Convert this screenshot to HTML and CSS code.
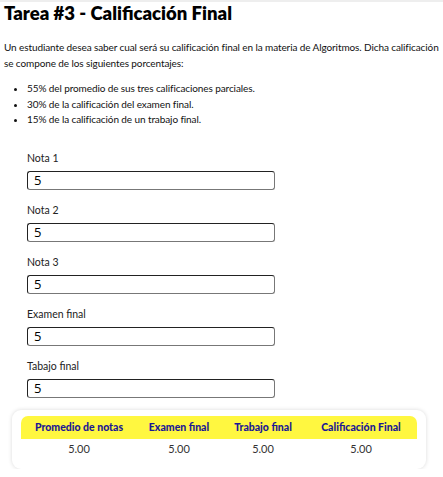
FILE: index.html
```html
<!DOCTYPE html>
<html lang="es">
<head>
<meta charset="utf-8">
<link rel="stylesheet" href="styles.css">
</head>
<body>
<div class="page">
  <h1 class="title">Tarea #3 - Calificación Final</h1>
  <p class="intro">Un estudiante desea saber cual será su calificación final en la materia de Algoritmos. Dicha calificación se compone de los siguientes porcentajes:</p>
  <ul class="rules">
    <li>55% del promedio de sus tres calificaciones parciales.</li>
    <li>30% de la calificación del examen final.</li>
    <li>15% de la calificación de un trabajo final.</li>
  </ul>
  <form class="form">
    <div class="field"><label class="label">Nota 1</label><input class="input" type="text" value="5"></div>
    <div class="field"><label class="label">Nota 2</label><input class="input" type="text" value="5"></div>
    <div class="field"><label class="label">Nota 3</label><input class="input" type="text" value="5"></div>
    <div class="field"><label class="label">Examen final</label><input class="input" type="text" value="5"></div>
    <div class="field"><label class="label">Tabajo final</label><input class="input" type="text" value="5"></div>
  </form>
  <div class="card">
    <table class="results">
      <thead>
        <tr><th class="c1">Promedio de notas</th><th class="c2">Examen final</th><th class="c3">Trabajo final</th><th class="c4">Calificación Final</th></tr>
      </thead>
      <tbody>
        <tr><td>5.00</td><td>5.00</td><td>5.00</td><td>5.00</td></tr>
      </tbody>
    </table>
  </div>
</div>
</body>
</html>
```
FILE: styles.css
```css
html, body {
  margin: 0;
  padding: 0;
  background: #ffffff;
}
body {
  border-top: 2px solid #eeeeee;
  font-family: "Lato", "Noto Sans", sans-serif;
  color: #111;
}
.page {
  padding: 0 4px;
}
.title {
  margin: 0;
  font-size: 18.5px;
  line-height: 22px;
  font-weight: 800;
  color: #000;
}
.intro {
  margin: 15px 0 0;
  font-size: 10px;
  letter-spacing: -0.1px;
  line-height: 16px;
}
.rules {
  margin: 10px 0 0;
  padding-left: 23px;
  font-size: 10px;
  letter-spacing: -0.1px;
  line-height: 15.5px;
}
.form {
  display: flex;
  flex-direction: column;
  gap: 13px;
  padding: 23px 0 0 23px;
}
.field {
  display: flex;
  flex-direction: column;
  gap: 6px;
}
.label {
  font-family: "Lato", sans-serif;
  font-size: 10.5px;
  line-height: 14px;
  color: #222;
}
.input {
  box-sizing: border-box;
  width: 248px;
  height: 19px;
  margin: 0;
  padding: 0 6px;
  border: 1px solid #222;
  border-right-color: #777;
  border-bottom-color: #777;
  border-radius: 3px;
  font-family: "Open Sans", sans-serif;
  font-size: 13px;
  color: #000;
  background: #fff;
}
.card {
  margin: 12px 13px 0 8px;
  padding: 6px 9px 10px;
  border-radius: 9px;
  box-shadow: 0 0 4px rgba(0,0,0,0.15);
  background: #fff;
}
.results {
  width: 100%;
  border-collapse: collapse;
  table-layout: fixed;
}
.results .c1 { width: 116px; }
.results .c2 { width: 84px; }
.results .c3 { width: 84px; }
.results th {
  background: #fff740;
  color: #1b1794;
  font-family: "Lato", sans-serif;
  font-weight: 900;
  font-size: 10.5px;
  height: 23px;
  padding: 0;
  white-space: nowrap;
}
.results th:first-child { border-top-left-radius: 7px; }
.results th:last-child { border-top-right-radius: 7px; }
.results td {
  text-align: center;
  font-family: "Lato", sans-serif;
  font-size: 11px;
  color: #333;
  height: 20px;
  padding: 0;
}
```
